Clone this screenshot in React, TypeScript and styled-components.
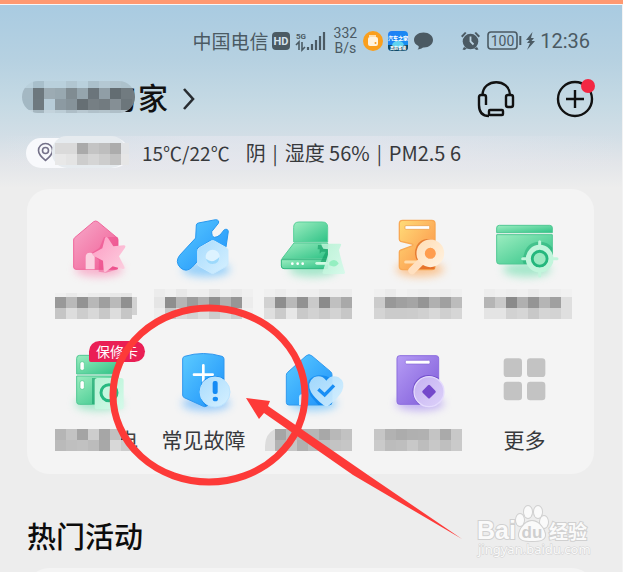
import React from "react";
import styled, { createGlobalStyle } from "styled-components";

const GlobalStyle = createGlobalStyle`
  * { box-sizing: border-box; }
  body {
    margin: 0;
    background: #ededed;
    font-family: "Noto Sans CJK SC", "Noto Sans", sans-serif;
    color: #37393c;
    overflow: hidden;
  }
  button { border: 0; padding: 0; background: none; font: inherit; color: inherit; cursor: pointer; }
  svg { display: block; flex: none; }
`;

const Screen = styled.div`
  position: relative;
  min-height: 100vh;
  overflow: hidden;
  border-top: 4px solid #ff9971;
  box-shadow: inset -1px 0 #f3f3f3;
  background: linear-gradient(180deg, #f6f8fa 0 1px, #a9cbe1 1px, #b6d1e1 56px, #c6dae4 102px, #d2dee6 132px, #e2e5e9 158px, #ededed 184px);
`;

const StatusBar = styled.div`
  display: flex;
  align-items: center;
  justify-content: flex-end;
  height: 72px;
  margin-top: 1px;
  padding-right: 33px;
  color: #4b5a63;
`;

const Carrier = styled.span`
  font-size: 19px;
  line-height: 24px;
  margin-right: 2px;
  white-space: nowrap;
`;

const Speed = styled.span`
  font: 14px/15px Roboto, sans-serif;
  text-align: center;
  margin: 0 6px 0 9px;
`;

const StatusGroup = styled.div<{ $gap: number }>`
  display: flex;
  align-items: center;
  gap: ${(p) => p.$gap}px;
`;

const Clock = styled.time`
  font: 20px/24px Roboto, sans-serif;
`;

const Header = styled.header`
  display: flex;
  align-items: center;
  justify-content: space-between;
  height: 44px;
  padding: 0 27px 0 22px;
`;

const HomeButton = styled.button`
  display: flex;
  align-items: center;
  gap: 13px;
`;

const Actions = styled.div`
  display: flex;
  align-items: center;
  gap: 38px;
`;

const Weather = styled.div`
  display: flex;
  align-items: center;
  height: 34px;
  margin-top: 15px;
  padding-left: 26px;
  font-size: 19px;
  line-height: 28px;
  white-space: pre;
  background: linear-gradient(90deg, transparent, rgba(232, 232, 240, 0.5) 30% 60%, transparent);
`;

const Place = styled.button`
  margin-right: 13px;
`;

const Temperature = styled.span`
  margin-right: 16px;
`;

const Reading = styled.span`
  font-size: 20px;
`;

const Divider = styled.span`
  width: 19px;
  text-align: center;
`;

const Card = styled.section`
  margin: 19px 29px 0 27px;
  padding: 21px 16px;
  border-radius: 22px;
  background: #f4f4f4;
`;

const Tiles = styled.div`
  display: grid;
  grid-template-columns: repeat(5, 1fr);
  row-gap: 25px;
`;

const Tile = styled.button`
  position: relative;
  display: flex;
  flex-direction: column;
  align-items: center;
`;

const TileLabel = styled.span`
  height: 28px;
  margin-top: 9px;
  font-size: 21px;
  line-height: 28px;
`;

const Badge = styled.span`
  position: absolute;
  top: -3px;
  left: 46px;
  width: 56px;
  height: 21px;
  border-radius: 11px 11px 11px 2px;
  background: #ea1f55;
  color: #fff;
  font-size: 14px;
  line-height: 20px;
  text-align: center;
`;

const SectionTitle = styled.h2`
  margin: 41px 27px 13px;
  font-size: 29px;
  line-height: 40px;
  font-weight: 500;
  color: #0c0c0c;
`;

const NextCard = styled.section`
  height: 60px;
  margin: 0 29px -56px 27px;
  border-radius: 22px;
  background: #f4f4f4;
`;

const Annotation = styled.svg`
  position: absolute;
  top: 296px;
  left: 100px;
  pointer-events: none;
`;

const Watermark = styled.svg`
  position: absolute;
  right: 26px;
  bottom: 10px;
  pointer-events: none;
`;

type MosaicRow = { x: number; y: number; w?: number; h?: number; colors: string };

function Cells({ rows }: { rows: MosaicRow[] }) {
  return (
    <g shapeRendering="crispEdges">
      {rows.map((row) =>
        row.colors.split(" ").map((c, i) => (
          <rect key={`${row.y}-${i}`} x={row.x + i * 11} y={row.y} width={row.w ?? 11} height={row.h ?? 11} fill={`#${c}`} />
        ))
      )}
    </g>
  );
}

function LabelMosaic({ rows, tail, round }: { rows: MosaicRow[]; tail?: string; round?: boolean }) {
  return (
    <svg width="107" height="37" viewBox="0 0 107 37" overflow="visible" aria-hidden="true">
      {tail && <text x="74" y="32" fontSize="21" fill="#444">{tail}</text>}
      <Cells rows={rows} />
      {round && <path d="M8 35V30Q8 18 18 13V35Z" fill="#dcdcdc" />}
    </svg>
  );
}

const MOSAICS: Record<string, MosaicRow[]> = {
  a: [
    { x: 12, y: 11, h: 4, colors: "f0f0f0 eaeaea f0f0f0 ececec ebebeb e8e8e8 e5e5e5" },
    { x: 12, y: 15, colors: "999999 b9b9b9 939393 b8b8b8 9f9f9f bababa 909090" },
    { x: 89, y: 15, w: 5, h: 18, colors: "d2d2d2" },
    { x: 12, y: 26, colors: "c5c5c5 dddddd cdcdcd d8d8d8 c8c8c8 dddddd c6c6c6" },
  ],
  b: [
    { x: 4, y: 7, h: 8, colors: "ececec f0f0f0 e8e8e8 efefef eeeeee e5e5e5 eeeeee ebebeb f0f0f0" },
    { x: 4, y: 15, colors: "e5e5e5 8e8e8e b5b5b5 9c9c9c b0b0b0 909090 b0b0b0 969696 ececec" },
    { x: 4, y: 26, colors: "ededed c8c8c8 dadada d3d3d3 dddddd cccccc dadada cccccc f0f0f0" },
  ],
  c: [
    { x: 7, y: 7, h: 8, colors: "f0f0f0 ececec f1f1f1 efefef efefef eaeaea eeeeee ededed" },
    { x: 7, y: 15, colors: "d1d1d1 8e8e8e b9b9b9 929292 cacaca 8b8b8b c0c0c0 a9a9a9" },
    { x: 7, y: 26, colors: "dfdfdf cbcbcb e7e7e7 c9c9c9 d2d2d2 cacaca d3d3d3 c7c7c7" },
  ],
  d: [
    { x: 10, y: 7, h: 8, colors: "f0f0f0 ebebeb f2f2f2 efefef ededed efefef ededed f0f0f0" },
    { x: 10, y: 15, colors: "cbcbcb 989898 a0a0a0 a5a5a5 959595 b0b0b0 a0a0a0 bcbcbc" },
    { x: 10, y: 26, colors: "d4d4d4 cbcbcb cbcbcb cccccc d0d0d0 d8d8d8 cfcfcf d6d6d6" },
  ],
  e: [
    { x: 13, y: 7, h: 8, colors: "ededed f0f0f0 eeeeee f0f0f0 ebebeb f0f0f0 eeeeee f1f1f1" },
    { x: 13, y: 15, colors: "b5b5b5 c9c9c9 8a8a8a b0b0b0 959595 b5b5b5 a0a0a0 dfdfdf" },
    { x: 13, y: 26, colors: "e4e4e4 e4e4e4 d2d2d2 d6d6d6 c8c8c8 d5d5d5 d3d3d3 dfdfdf" },
  ],
  f: [
    { x: 12, y: 13, colors: "b5b5b5 c3c3c3 a4a4a4 cdcdcd a6a6a6 c1c1c1" },
    { x: 12, y: 24, colors: "bababa bfbfbf c1c1c1 bcbcbc a8a8a8 d8d8d8 cccccc" },
  ],
  g: [
    { x: 18, y: 13, colors: "a5a5a5 bababa b5b5b5 b6b6b6 a8a8a8 b8b8b8 c2c2c2" },
    { x: 18, y: 24, colors: "b2b2b2 c6c6c6 b0b0b0 bcbcbc bebebe c3c3c3 c6c6c6" },
  ],
  h: [
    { x: 10, y: 13, colors: "c6c6c6 b2b2b2 acacac b0b0b0 b1b1b1 c4c4c4 aaaaaa c8c8c8" },
    { x: 10, y: 24, colors: "cacaca bcbcbc bebebe c8c8c8 bdbdbd c8c8c8 bfbfbf cacaca" },
  ],
};

function Grad({ id, from, to }: { id: string; from: string; to: string }) {
  return (
    <linearGradient id={id} x1="0" y1="0" x2="1" y2="1">
      <stop offset="0" stopColor={from} />
      <stop offset="1" stopColor={to} />
    </linearGradient>
  );
}

function Defs() {
  return (
    <svg width="0" height="0" aria-hidden="true">
      <defs>
        <filter id="soft" x="-50%" y="-80%" width="200%" height="260%">
          <feGaussianBlur stdDeviation="13" />
        </filter>
        <Grad id="pink" from="#f7a9c9" to="#f05a93" />
        <Grad id="blush" from="#fd9cc3" to="#fcd0e0" />
        <Grad id="blue" from="#5ccbff" to="#1c90fa" />
        <Grad id="ice" from="#a9dcfd" to="#d6f0ff" />
        <Grad id="green" from="#9cedc0" to="#2fc286" />
        <Grad id="mint" from="#b5f2d3" to="#d5faea" />
        <Grad id="orange" from="#ffdc78" to="#fb8c44" />
        <Grad id="peach" from="#ffe0bb" to="#fff0dc" />
        <Grad id="purple" from="#b69cf5" to="#7d5ad8" />
        <Grad id="lilac" from="#c5b1f1" to="#ddd2fa" />
        <Grad id="app" from="#1f7df5" to="#1694f2" />
      </defs>
    </svg>
  );
}

function TileIcon({ glow, children }: { glow?: string; children: React.ReactNode }) {
  return (
    <svg width="84" height="72" viewBox="4 2 252 216" overflow="visible" aria-hidden="true">
      {glow && <ellipse cx="136" cy="180" rx="72" ry="22" fill={glow} opacity="0.55" filter="url(#soft)" />}
      {children}
    </svg>
  );
}

const HouseStar = () => (
  <TileIcon glow="#fb7fae">
    <path d="M120 37q6-4 12 0l58 48q3 3 3 7v81q0 7-7 7H67q-7 0-7-7V92q0-4 3-7Z" fill="url(#pink)" stroke="#f0659b" strokeWidth="3" />
    <path d="M96 180v-37q0-13 13-13t14 13v37Z" fill="#fbd0e0" />
    <path d="M151 83l-14 33-23 15 22 22-1 34 22 3 36-10V83Z" fill="#ea3f82" opacity="0.4" />
    <path d="M154 86q4-6 9 0l16 25 31-3q8 0 4 7l-18 26 16 31q3 8-5 7l-30-8-20 16q-7 4-7-4l-2-29-29-15q-6-5 1-8l26-14Z" fill="url(#blush)" />
  </TileIcon>
);

const Wrench = () => (
  <TileIcon glow="#48b2ff">
    <path d="M107 47q1-5 6-6l52-10q12 1 8 11l-20 25q0 15 8 17 8 0 17-7l13-16q10-4 12 5l-7 47-45 20-17-3-39 43q-18 18-36 2-17-18-2-37l48-52Z" fill="url(#blue)" stroke="#2798f0" strokeWidth="3" />
    <path d="M150 92L109 117v40l17 12 40-25Z" fill="#087de8" opacity="0.65" />
    <path d="M151 95q5-3 10 0l36 20q5 3 5 8v40q0 5-5 8l-36 20q-5 3-10 0l-35-20q-5-3-5-8v-40q0-5 5-8Z" fill="url(#ice)" stroke="#c9eaff" strokeWidth="3" />
    <circle cx="156" cy="142" r="21" fill="#ddf3ff" />
    <path d="M136 148q20 17 40-5-1 21-20 21-16 0-20-16Z" fill="#9cd9fc" />
  </TileIcon>
);

const Stove = () => (
  <TileIcon glow="#62dca7">
    <path d="M78 98V54q0-16 16-16h70q16 0 16 16v44Z" fill="url(#green)" stroke="#5bd09b" strokeWidth="3" />
    <path d="M79 101H180v47H43Z" fill="url(#green)" stroke="#54ca95" strokeWidth="3" />
    <path d="M41 151H180v27H49q-8 0-8-8Z" fill="url(#green)" stroke="#31b77e" strokeWidth="3" />
    <g fill="#fff"><circle cx="74" cy="163" r="4" /><circle cx="90" cy="163" r="4" /><circle cx="105" cy="163" r="4" /></g>
    <path d="M151 107h30v58l-24-3 17-35h-12l-6 6v-13h-6Z" fill="#109c63" opacity="0.6" />
    <path d="M147 162h30" stroke="#cffbe3" strokeWidth="8" strokeLinecap="round" />
    <path d="M161 103h56q5 0 3 5l-6 14q6 31 18 67 1 5-4 5h-59q-6 0-4-6l16-52 3-16-17-2-5-9Z" fill="url(#mint)" opacity="0.9" />
    <path d="M185 159q16-15 28 3-8 15-28 6Z" fill="#94efc1" />
  </TileIcon>
);

const SearchTicket = () => (
  <TileIcon glow="#ff9f45">
    <path d="M84 33h87q10 0 10 10v54l-12 10 12 10v54q0 10-10 10H84q-10 0-10-10v-43q0-4 4-6l34-12q6-3 0-6L78 96q-4-2-4-6V43q0-10 10-10Z" fill="url(#orange)" stroke="#f8a853" strokeWidth="4" />
    <rect x="91" y="49" width="74" height="11" rx="3" fill="#fff" stroke="#e89a46" strokeWidth="2" />
    <path d="M93 158h34" stroke="#ffdcab" strokeWidth="9" strokeLinecap="round" />
    <path d="M180 95q-35-17-54 14-12 27 4 49l-16 22h66Z" fill="#d85b15" opacity="0.6" />
    <circle cx="167" cy="132" r="17" fill="#ff9d4e" />
    <path d="M143 153L112 184" stroke="#ffe0c0" strokeWidth="22" strokeLinecap="round" />
    <circle cx="167" cy="132" r="29" fill="none" stroke="url(#peach)" strokeWidth="25" />
  </TileIcon>
);

const TargetCard = () => (
  <TileIcon glow="#62dca7">
    <path d="M45 70V56q0-8 8-8H204q8 0 8 8v14Z" fill="url(#green)" stroke="#51c894" strokeWidth="3" />
    <path d="M45 76H212v80q0 8-8 8H53q-8 0-8-8Z" fill="url(#green)" stroke="#51c894" strokeWidth="3" />
    <path d="M174 97q-40 0-48 42l-6 8 6 17h78q8 0 8-8v-41q-13-18-38-18Z" fill="#14a36c" opacity="0.4" />
    <circle cx="174" cy="148" r="28" fill="#25b77d" />
    <circle cx="174" cy="148" r="34" fill="none" stroke="#c2f5dc" strokeWidth="15" />
    <path d="M174 97v15M174 184v16M123 148h15M210 148h16" stroke="#c2f5dc" strokeWidth="9" strokeLinecap="round" />
    <circle cx="174" cy="148" r="18" fill="#9ae9c1" />
  </TileIcon>
);

const Appliances = () => (
  <TileIcon glow="#62dca7">
    <path d="M69 92V45q0-9 9-9H193v56Z" fill="url(#green)" stroke="#51c894" strokeWidth="3" />
    <path d="M69 98H193v85H77q-8 0-8-8Z" fill="url(#green)" stroke="#51c894" strokeWidth="3" />
    <g fill="#fff" stroke="#52c98e" strokeWidth="2"><rect x="79" y="55" width="13" height="26" rx="6" /><rect x="79" y="112" width="13" height="26" rx="6" /></g>
    <path d="M115 104h77v78h-77Z" fill="#139f69" opacity="0.6" />
    <rect x="123" y="104" width="87" height="94" rx="8" fill="url(#mint)" />
    <circle cx="166" cy="148" r="24" fill="#c5f7df" stroke="#26b980" strokeWidth="9" />
  </TileIcon>
);

const Shield = () => (
  <TileIcon glow="#48a8ff">
    <path d="M66 47q0-6 6-8 56-17 112 0 6 2 6 8V156q0 5-5 8l-49 25q-4 2-8 0l-57-26q-5-2-5-8Z" fill="url(#blue)" stroke="#3197ee" strokeWidth="3" />
    <path d="M128 66v56M100 94h56" stroke="#fff" strokeWidth="8" strokeLinecap="round" />
    <path d="M190 105q-42-20-67 12-16 39 12 72l51-25q4-2 4-7Z" fill="#087ae5" opacity="0.55" />
    <circle cx="163" cy="146" r="45" fill="url(#ice)" stroke="#bce4ff" strokeWidth="3" />
    <rect x="156" y="113" width="15" height="39" rx="6" fill="#158bf4" />
    <ellipse cx="164" cy="167" rx="8" ry="7" fill="#158bf4" />
  </TileIcon>
);

const HouseHeart = () => (
  <TileIcon glow="#4ab5ff">
    <path d="M116 37q8-6 16 0l57 48q4 4 4 9v82q0 9-9 9H64q-8 0-8-8V96q0-6 4-9Z" fill="url(#blue)" stroke="#3099ee" strokeWidth="3" />
    <path d="M94 185v-23q0-10 13-10t14 10v23Z" fill="#caecff" />
    <path d="M177 99q-35-10-53 11-9 20 5 48l23 27h32q9 0 9-9v-69Z" fill="#087fe9" opacity="0.65" />
    <path d="M176 112q-15-20-37-10-23 16-9 44 10 18 38 40 8 6 16 0 30-24 39-42 12-29-10-42-22-10-37 10Z" fill="url(#ice)" opacity="0.94" />
    <path d="M152 138l19 17 28-29" stroke="#188ef5" strokeWidth="10" fill="none" />
  </TileIcon>
);

const Voucher = () => (
  <TileIcon glow="#9a7cf0">
    <rect x="67" y="37" width="125" height="146" rx="8" fill="url(#purple)" stroke="#8c6edf" strokeWidth="3" />
    <rect x="92" y="51" width="74" height="11" rx="4" fill="#fff" stroke="#8667d6" strokeWidth="2" />
    <path d="M192 103q-48-22-73 17-16 32 12 63h53q8 0 8-8Z" fill="#5a32ba" opacity="0.55" />
    <circle cx="163" cy="145" r="45" fill="url(#lilac)" stroke="#e5dcfd" strokeWidth="4" />
    <path d="M160 126q3-3 6 0l16 16q3 3 0 6l-16 16q-3 3-6 0l-16-16q-3-3 0-6Z" fill="#7448cb" />
  </TileIcon>
);

const More = () => (
  <TileIcon>
    <g fill="#c3c3c3">
      <rect x="66" y="45" width="55" height="56" rx="10" />
      <rect x="136" y="45" width="55" height="56" rx="10" />
      <rect x="66" y="115" width="55" height="56" rx="10" />
      <rect x="136" y="115" width="55" height="56" rx="10" />
    </g>
  </TileIcon>
);

type Entry = { Icon: () => React.ReactElement; label?: string; mosaic?: string; tail?: string; round?: boolean; badge?: string };

const ENTRIES: Entry[] = [
  { Icon: HouseStar, mosaic: "a" },
  { Icon: Wrench, mosaic: "b" },
  { Icon: Stove, mosaic: "c" },
  { Icon: SearchTicket, mosaic: "d" },
  { Icon: TargetCard, mosaic: "e" },
  { Icon: Appliances, mosaic: "f", tail: "电", badge: "保修卡" },
  { Icon: Shield, label: "常见故障" },
  { Icon: HouseHeart, mosaic: "g", round: true },
  { Icon: Voucher, mosaic: "h" },
  { Icon: More, label: "更多" },
];

function SignalIcons() {
  return (
    <svg width="54" height="20" viewBox="0 0 54 20" overflow="visible" aria-label="HD 5G">
      <rect x="1" y="1" width="18" height="18" rx="4" fill="#4b5a63" />
      <text x="10" y="14" textAnchor="middle" fontFamily="Roboto" fontWeight="700" fontSize="11" fill="#d5e3ec">HD</text>
      <text x="25" y="8" fontFamily="Roboto" fontWeight="700" fontSize="8" fill="#4b5a63">5G</text>
      <path d="M25 14l3-3v8M31 11v8l3-3" stroke="#4b5a63" strokeWidth="1.600" fill="none" />
      <path d="M37 19v-3M41 19v-6M45 19V9M49 19V5M53 19V1" stroke="#4b5a63" strokeWidth="2.200" />
    </svg>
  );
}

function NotificationIcons() {
  return (
    <svg width="70" height="20" viewBox="0 0 70 20" overflow="visible" aria-hidden="true">
      <circle cx="10" cy="10" r="10" fill="#fa9f1d" />
      <rect x="5" y="6" width="10" height="9" rx="2" fill="#fff3df" />
      <path d="M6 5h7" stroke="#fff3df" strokeWidth="1.500" />
      <circle cx="12.500" cy="12" r="1" fill="#fa9f1d" />
      <rect x="25" y="0" width="20" height="20" rx="4" fill="url(#app)" />
      <path d="M25 14h20v2q0 4-4 4H29q-4 0-4-4Z" fill="#0d4a68" />
      <path d="M29 14q1-4 6-4t6 4l-2 2h-8Z" fill="#5fd3f1" />
      <text x="35" y="9" textAnchor="middle" fontSize="5" fontWeight="900" fill="#fff">汽车之家</text>
      <text x="35" y="19" textAnchor="middle" fontSize="4" fontWeight="900" fill="#fff">真的省钱</text>
      <path d="M60.500 1.500c5.500 0 9.500 3.200 9.500 7.500s-4 7.500-9 7.500c-2 0-2.500 1.800-6.500 2 1.200-1 1.500-2.500 1-3.500C52.500 13.500 51 11.500 51 9c0-4.300 4-7.500 9.500-7.500Z" fill="#4b5a63" />
    </svg>
  );
}

function PowerIcons() {
  return (
    <svg width="76" height="20" viewBox="0 0 76 20" aria-label="100">
      <g fill="#4b5a63">
        <circle cx="9.500" cy="10.500" r="7.800" />
        <path d="M0 5l4-4 1.500 1L1.500 6.500ZM19 5l-4-4-1.500 1 4 4.500ZM3 16l-1.500 2.500L3.500 19 6 17.500ZM16 16l1.500 2.500-2 .5L13 17.500Z" />
      </g>
      <path d="M9.500 5.500v5l3 3" stroke="#bdd4e2" strokeWidth="1.800" fill="none" />
      <rect x="27" y="1" width="29" height="17" rx="3" fill="none" stroke="#4b5a63" strokeWidth="1.600" />
      <text x="41.500" y="15" textAnchor="middle" fontFamily="Roboto" fontSize="14" fill="#4b5a63">100</text>
      <path d="M59.300 5v9" stroke="#4b5a63" strokeWidth="2" />
      <path d="M71.500 1l-6.500 8h3.500l-2.500 3h3l-3 7 8-9h-3.500l2.500-3h-3Z" fill="#4b5a63" />
    </svg>
  );
}

function HomeName() {
  return (
    <svg width="148" height="44" viewBox="0 -4 148 44" overflow="visible" aria-label="家">
      <text x="84" y="28" fontSize="30" fontWeight="500" fill="#111">的</text>
      <text x="116" y="28" fontSize="30" fontWeight="500" fill="#111">家</text>
      <clipPath id="name-clip"><rect x="0" y="0" width="113" height="32" rx="16" /></clipPath>
      <g clipPath="url(#name-clip)">
        <Cells
          rows={[
            { x: 0, y: 0, h: 7, colors: "b9d0dc a8bfcb b9d0dc b9d0dc b1c6d1 b9d0dc abc0cb b4c8d3 b0c4ce adc2cc adc2cc" },
            { x: 0, y: 7, colors: "a4b8c3 6d787e 9cabb3 98a8b0 808c92 95a5ad 6b757b 909ea6 636d72 717b80 727c81" },
            { x: 0, y: 18, colors: "a3b8c3 6e797f b7ccd8 8c9aa2 86939a 666f74 767f84 727b80 858f95 6c767b 727c81" },
            { x: 0, y: 29, colors: "c3d3dc a6b7c0 c3d3dc bccdd6 aebec7 b8c8d1 b1c1ca b4c4cc afbfc8 b4c3cb aebdc5" },
          ]}
        />
      </g>
    </svg>
  );
}

function PlacePill() {
  return (
    <svg width="103" height="34" viewBox="0 0 103 34" aria-label="位置">
      <rect x="0" y="2" width="103" height="30" rx="15" fill="#f8f9fc" />
      <path d="M19.500 24.500c-4-3.500-7-6-7-10a7 7 0 0 1 14 0c0 4-3 6.500-7 10Z" fill="none" stroke="#747189" strokeWidth="1.600" />
      <circle cx="19.500" cy="14.500" r="3" fill="none" stroke="#747189" strokeWidth="1.600" />
      <rect x="26" y="0" width="74" height="32" rx="15" fill="#e6ebef" />
      <Cells
        rows={[
          { x: 29, y: 7, colors: "dadada dadada aaaaaa c4c4c4 bebebe acacac e2e4e6" },
          { x: 29, y: 18, colors: "e8e8e8 e4e4e4 cdcdcd d5d5d5 cdcdcd c2c2c2 e6e6e6" },
        ]}
      />
    </svg>
  );
}

export default function App() {
  return (
    <>
      <GlobalStyle />
      <Screen>
        <StatusBar>
          <Carrier>中国电信</Carrier>
          <SignalIcons />
          <Speed>332<br />B/s</Speed>
          <StatusGroup $gap={28}>
            <NotificationIcons />
            <StatusGroup $gap={3}>
              <PowerIcons />
              <Clock>12:36</Clock>
            </StatusGroup>
          </StatusGroup>
        </StatusBar>
        <Header>
          <HomeButton>
            <HomeName />
            <svg width="12" height="24" viewBox="0 0 12 24" fill="none" stroke="#282c30" strokeWidth="2.600" aria-hidden="true">
              <path d="M1 2l9 10-9 10" />
            </svg>
          </HomeButton>
          <Actions>
            <button aria-label="客服">
              <svg width="44" height="44" viewBox="0 0 44 44" fill="none" stroke="#111" strokeWidth="2.400" aria-hidden="true">
                <path d="M8.500 18C9 1 35.500 1 36 18" />
                <path d="M12 28v-8q0-2-2-2H7q-2 0-2 2v8q0 11 10 11" />
                <rect x="32" y="18" width="7" height="12" rx="2" />
                <rect x="15" y="33" width="14" height="5" rx="1" />
              </svg>
            </button>
            <button aria-label="添加">
              <svg width="40" height="44" viewBox="0 0 40 44" fill="none" stroke="#111" strokeWidth="2.400" aria-hidden="true">
                <circle cx="19" cy="22" r="17" />
                <path d="M10 22h18M19 13v18" />
                <circle cx="32" cy="9" r="7" fill="#f32843" stroke="none" />
              </svg>
            </button>
          </Actions>
        </Header>
        <Weather>
          <Place><PlacePill /></Place>
          <Temperature>15℃/22℃</Temperature>
          <Reading>阴</Reading>
          <Divider>|</Divider>
          <Reading>湿度 56%</Reading>
          <Divider>|</Divider>
          <Reading>PM2.5 6</Reading>
        </Weather>
        <Card>
          <Tiles>
            {ENTRIES.map(({ Icon, label, mosaic, tail, round, badge }, i) => (
              <Tile key={i}>
                <Icon />
                {label && <TileLabel>{label}</TileLabel>}
                {mosaic && <LabelMosaic rows={MOSAICS[mosaic]} tail={tail} round={round} />}
                {badge && <Badge>{badge}</Badge>}
              </Tile>
            ))}
          </Tiles>
        </Card>
        <SectionTitle>热门活动</SectionTitle>
        <NextCard />
        <Watermark width="120" height="60" viewBox="0 0 120 60" overflow="visible">
          <g fill="#fafafa" stroke="#d0d0d0" strokeWidth="2" paintOrder="stroke" fontFamily="Liberation Sans, Noto Sans CJK SC, sans-serif">
            <text x="0" y="37" fontSize="25" fontWeight="700">Bai</text>
            <ellipse cx="43" cy="18" rx="4" ry="6" />
            <ellipse cx="51" cy="10" rx="4" ry="6" />
            <ellipse cx="61" cy="10" rx="4" ry="6" />
            <ellipse cx="67" cy="20" rx="4" ry="6" />
            <path d="M55 19c7 0 13 9 13 14 0 5-5 6-13 6s-13-1-13-6c0-5 6-14 13-14Z" />
            <text x="55" y="36" textAnchor="middle" fontSize="17" fontWeight="700" fill="#cfcfcf" stroke="none">du</text>
            <text x="72" y="37" fontSize="19" fontWeight="700">经验</text>
            <text x="1" y="52" fontSize="13" strokeWidth="1" fontFamily="Noto Sans, sans-serif">jingyan.baidu.com</text>
          </g>
        </Watermark>
        <Annotation width="370" height="250" viewBox="0 0 370 250" aria-hidden="true">
          <ellipse cx="109" cy="95" rx="96" ry="87" fill="none" stroke="#fd3a38" strokeWidth="7" />
          <path d="M146 98l24 3-2 5 100 69 94 64-109-64-89-62-5 6Z" fill="#fd3a38" />
        </Annotation>
      </Screen>
      <Defs />
    </>
  );
}
